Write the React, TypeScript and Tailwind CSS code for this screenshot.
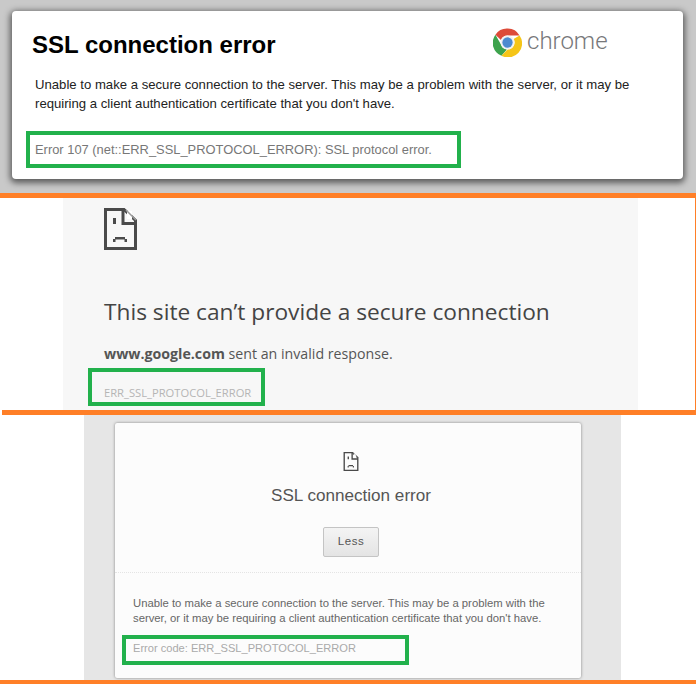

import React from "react";

function SadTab({ className }: { className: string }) {
  return (
    <svg viewBox="0 0 33 42" className={className} fill="none">
      <path d="M1.5 1.5H20L31.5 12.5V40.5H1.5Z" stroke="#4a4a4a" strokeWidth="3" strokeLinejoin="miter" />
      <path d="M19 1.5V15.5H31.5" stroke="#4a4a4a" strokeWidth="3" />
      <rect x="23" y="3" width="5" height="8" fill="#fff" />
      <path d="M22 2L32 12" stroke="#9a9a9a" strokeWidth="1.5" />
      <rect x="9" y="10" width="3" height="6" fill="#4a4a4a" />
      <path d="M9 34V31H11V29H21V31H23V34H20.5V31.5H11.5V34Z" fill="#4a4a4a" />
    </svg>
  );
}

function ChromeLogo() {
  return (
    <svg viewBox="0 0 48 48" className="w-[29px] h-[29px] shrink-0">
      <path d="M24 1A23 23 0 0 1 44 12.500H24A11.500 11.500 0 0 0 13.200 20L4 11A23 23 0 0 1 24 1Z" fill="#dd4b39" />
      <path d="M4 11L13.200 27.500A11.500 11.500 0 0 0 23 35.500L14 46A23 23 0 0 1 4 11Z" fill="#3da34d" />
      <path d="M44 12.500A23 23 0 0 1 14 45.800L24 35.500A11.500 11.500 0 0 0 34 18Z" fill="#f5c518" />
      <circle cx="24" cy="24" r="11.500" fill="#f2f2f2" />
      <circle cx="24" cy="24" r="8.500" fill="#4c8bd0" />
    </svg>
  );
}

export default function App() {
  return (
    <div className="w-[696px] h-[684px] overflow-hidden flex flex-col bg-white font-['Liberation_Sans',Arial,sans-serif]">
      {/* Chrome classic */}
      <section className="h-[193px] bg-[#c9c9c9] pl-3 pr-[13px] pt-[11px] shrink-0">
        <div className="h-[168px] bg-white rounded-[4px] shadow-[0_2px_6px_2px_rgba(0,0,0,0.55)] pl-[14px] pt-[19px] flex flex-col">
          <div className="flex items-start">
            <h1 className="ml-[6px] text-[24px] leading-[30px] font-bold text-black w-[461px]">SSL connection error</h1>
            <div className="flex items-center gap-[5px] -mt-[2px]">
              <ChromeLogo />
              <span className="font-['Roboto',sans-serif] font-light text-[24px] leading-[30px] text-[#77787a] -mt-[3px]">chrome</span>
            </div>
          </div>
          <p className="ml-[9px] mt-[15px] text-[13.150px] leading-[19px] text-[#222] w-[620px]">
            Unable to make a secure connection to the server. This may be a problem with the server, or it may be requiring a client authentication certificate that you don't have.
          </p>
          <div className="mt-[18px] w-[435px] h-[37px] border-4 border-[#22b14c] pl-[5px] flex items-center text-[12.900px] text-[#777]">
            Error 107 (net::ERR_SSL_PROTOCOL_ERROR): SSL protocol error.
          </div>
        </div>
      </section>
      <div className="h-[5px] bg-[#ff7f27] shrink-0" />

      {/* Modern Chrome */}
      <section className="h-[212px] shrink-0 border-r border-[#ff7f27] pl-[63px] pr-[57px]">
        <div className="h-full bg-[#f7f7f7] pl-[41px] pt-[10px] flex flex-col">
          <SadTab className="w-[33px] h-[42px] shrink-0" />
          <h2 className="mt-[46px] font-['Open_Sans',sans-serif] text-[22.700px] leading-[32px] text-[#444]">
            This site can’t provide a secure connection
          </h2>
          <p className="mt-[17px] font-['Open_Sans',sans-serif] text-[14.200px] leading-[18px] text-[#555]">
            <b>www.google.com</b> sent an invalid response.
          </p>
          <div className="-ml-[16px] mt-[5px] w-[177px] h-[38px] border-4 border-[#22b14c] pl-[12px] pt-[13px] font-['Open_Sans',sans-serif] text-[11.200px] leading-[16px] text-[#b5b5b5]">
            ERR_SSL_PROTOCOL_ERROR
          </div>
        </div>
      </section>
      <div className="h-[5px] bg-[#ff7f27] ml-[2px] shrink-0" />

      {/* Chrome interstitial */}
      <section className="h-[265px] shrink-0 pl-[84px] pr-[75px]">
        <div className="h-full bg-[#e6e6e6] pl-[31px] pr-[40px] pt-[8px]">
          <div className="h-[255px] bg-[#fcfcfc] rounded-[2px] shadow-[0_0_3px_rgba(0,0,0,0.45)] flex flex-col">
            <div className="h-[150px] flex flex-col items-center border-b border-dotted border-[#e4e4e4] pt-[29px] pl-[6px]">
              <SadTab className="w-[16px] h-[19px]" />
              <h3 className="mt-[15px] text-[17.100px] leading-[20px] text-[#555]">SSL connection error</h3>
              <button className="mt-[21px] w-[56px] h-[30px] bg-gradient-to-b from-[#f4f4f4] to-[#e4e4e4] border border-[#c4c4c4] rounded-[2px] text-[11.500px] tracking-[0.5px] text-[#555]">
                Less
              </button>
            </div>
            <p className="ml-[18px] mt-[23px] w-[425px] text-[11.300px] leading-[15px] text-[#666]">
              Unable to make a secure connection to the server. This may be a problem with the server, or it may be requiring a client authentication certificate that you don't have.
            </p>
            <div className="ml-[7px] mt-[9px] w-[287px] h-[30px] border-4 border-[#22b14c] pl-[7px] pb-[4px] flex items-center text-[11.100px] text-[#aaa]">
              Error code: ERR_SSL_PROTOCOL_ERROR
            </div>
          </div>
        </div>
      </section>
      <div className="flex-1 bg-[#ff7f27]" />
    </div>
  );
}
